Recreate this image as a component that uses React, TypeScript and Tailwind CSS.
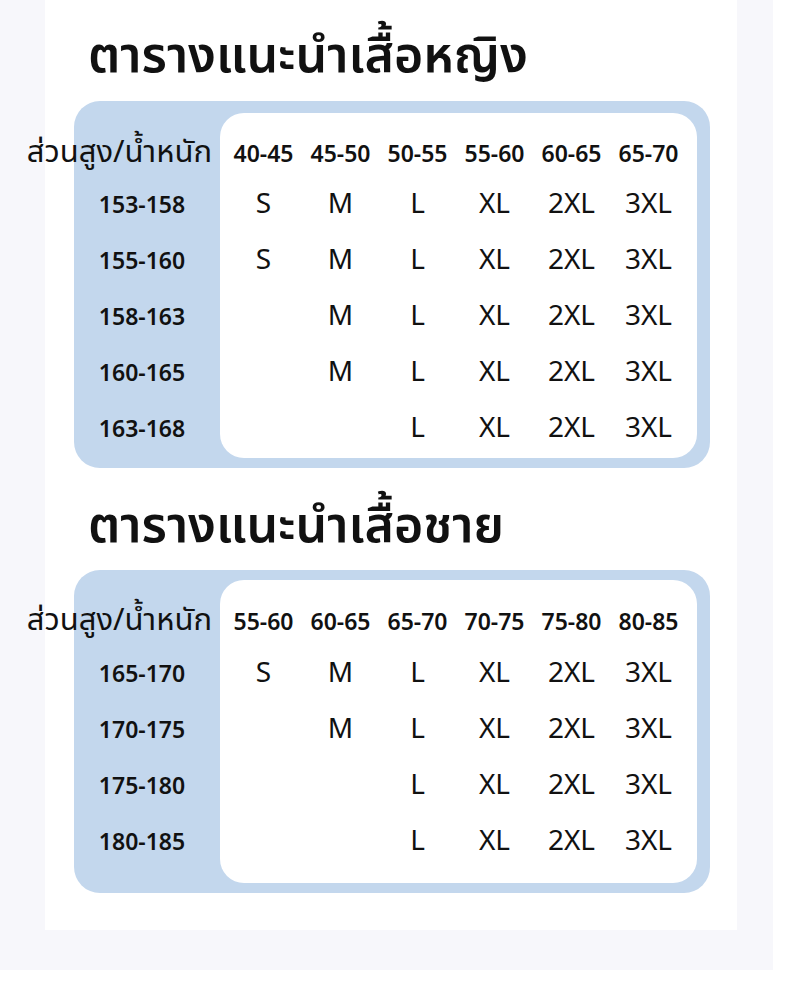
const thai = "font-['Noto_Sans_Thai','Noto_Sans','DejaVu_Sans',sans-serif]";
const num = "font-['Noto_Sans','Open_Sans',sans-serif]";

interface TableProps {
  weights: string[];
  rows: { h: string; sizes: string[] }[];
  cardPt: string;
  innerPt: string;
  headGap: string;
  innerPb: string;
}

function SizeTable({ weights, rows, cardPt, innerPt, headGap, innerPb }: TableProps) {
  return (
    <div className={`ml-[29px] w-[636px] rounded-[26px] bg-[#c3d7ed] ${cardPt} pr-[13px] pb-[10px] flex`}>
      <div className={`w-[146px] shrink-0 flex flex-col ${innerPt}`}>
        <div
          className={`h-[40px] flex items-center justify-end pr-[8px] whitespace-nowrap text-[31px] text-[#111] ${thai}`}
        >
          ส่วนสูง/น้ำหนัก
        </div>
        <div className={headGap} />
        {rows.map((r) => (
          <div
            key={r.h}
            className={`h-[56px] flex items-center justify-center pr-[10px] text-[23px] font-semibold text-[#111] ${num}`}
          >
            {r.h}
          </div>
        ))}
      </div>
      <div className={`flex-1 bg-white rounded-[24px] pl-[5px] pr-[10px] ${innerPt} ${innerPb}`}>
        <div className={`grid grid-cols-6 h-[40px] items-center text-center text-[23px] font-semibold text-[#111] ${num}`}>
          {weights.map((w) => (
            <div key={w}>{w}</div>
          ))}
        </div>
        <div className={headGap} />
        {rows.map((r) => (
          <div
            key={r.h}
            className={`grid grid-cols-6 h-[56px] items-center text-center text-[28px] text-[#111] ${num}`}
          >
            {r.sizes.map((s, i) => (
              <div key={i} className="-mt-[4px]">
                {s}
              </div>
            ))}
          </div>
        ))}
      </div>
    </div>
  );
}

export default function App() {
  const all = ["S", "M", "L", "XL", "2XL", "3XL"];
  return (
    <div className="w-[790px] h-[1000px] bg-white">
      <div className="w-[773px] h-[970px] bg-[#f7f7fb] pl-[45px]">
        <div className="w-[692px] h-[930px] bg-white pt-[22px]">
          <h1 className={`h-[70px] pl-[43px] text-[50px] leading-[70px] font-semibold text-[#111] whitespace-nowrap ${thai}`}>
            ตารางแนะนำเสื้อหญิง
          </h1>
          <div className="mt-[9px]">
            <SizeTable
              weights={["40-45", "45-50", "50-55", "55-60", "60-65", "65-70"]}
              rows={[
                { h: "153-158", sizes: all },
                { h: "155-160", sizes: all },
                { h: "158-163", sizes: ["", "M", "L", "XL", "2XL", "3XL"] },
                { h: "160-165", sizes: ["", "M", "L", "XL", "2XL", "3XL"] },
                { h: "163-168", sizes: ["", "", "L", "XL", "2XL", "3XL"] },
              ]}
              cardPt="pt-[12px]"
              innerPt="pt-[20px]"
              headGap="h-[3px]"
              innerPb="pb-[2px]"
            />
          </div>
          <h1
            className={`mt-[24px] h-[70px] pl-[43px] text-[50px] leading-[70px] font-semibold text-[#111] whitespace-nowrap ${thai}`}
          >
            ตารางแนะนำเสื้อชาย
          </h1>
          <div className="mt-[8px]">
            <SizeTable
              weights={["55-60", "60-65", "65-70", "70-75", "75-80", "80-85"]}
              rows={[
                { h: "165-170", sizes: all },
                { h: "170-175", sizes: ["", "M", "L", "XL", "2XL", "3XL"] },
                { h: "175-180", sizes: ["", "", "L", "XL", "2XL", "3XL"] },
                { h: "180-185", sizes: ["", "", "L", "XL", "2XL", "3XL"] },
              ]}
              cardPt="pt-[10px]"
              innerPt="pt-[21px]"
              headGap="h-[4px]"
              innerPb="pb-[14px]"
            />
          </div>
        </div>
      </div>
    </div>
  );
}
